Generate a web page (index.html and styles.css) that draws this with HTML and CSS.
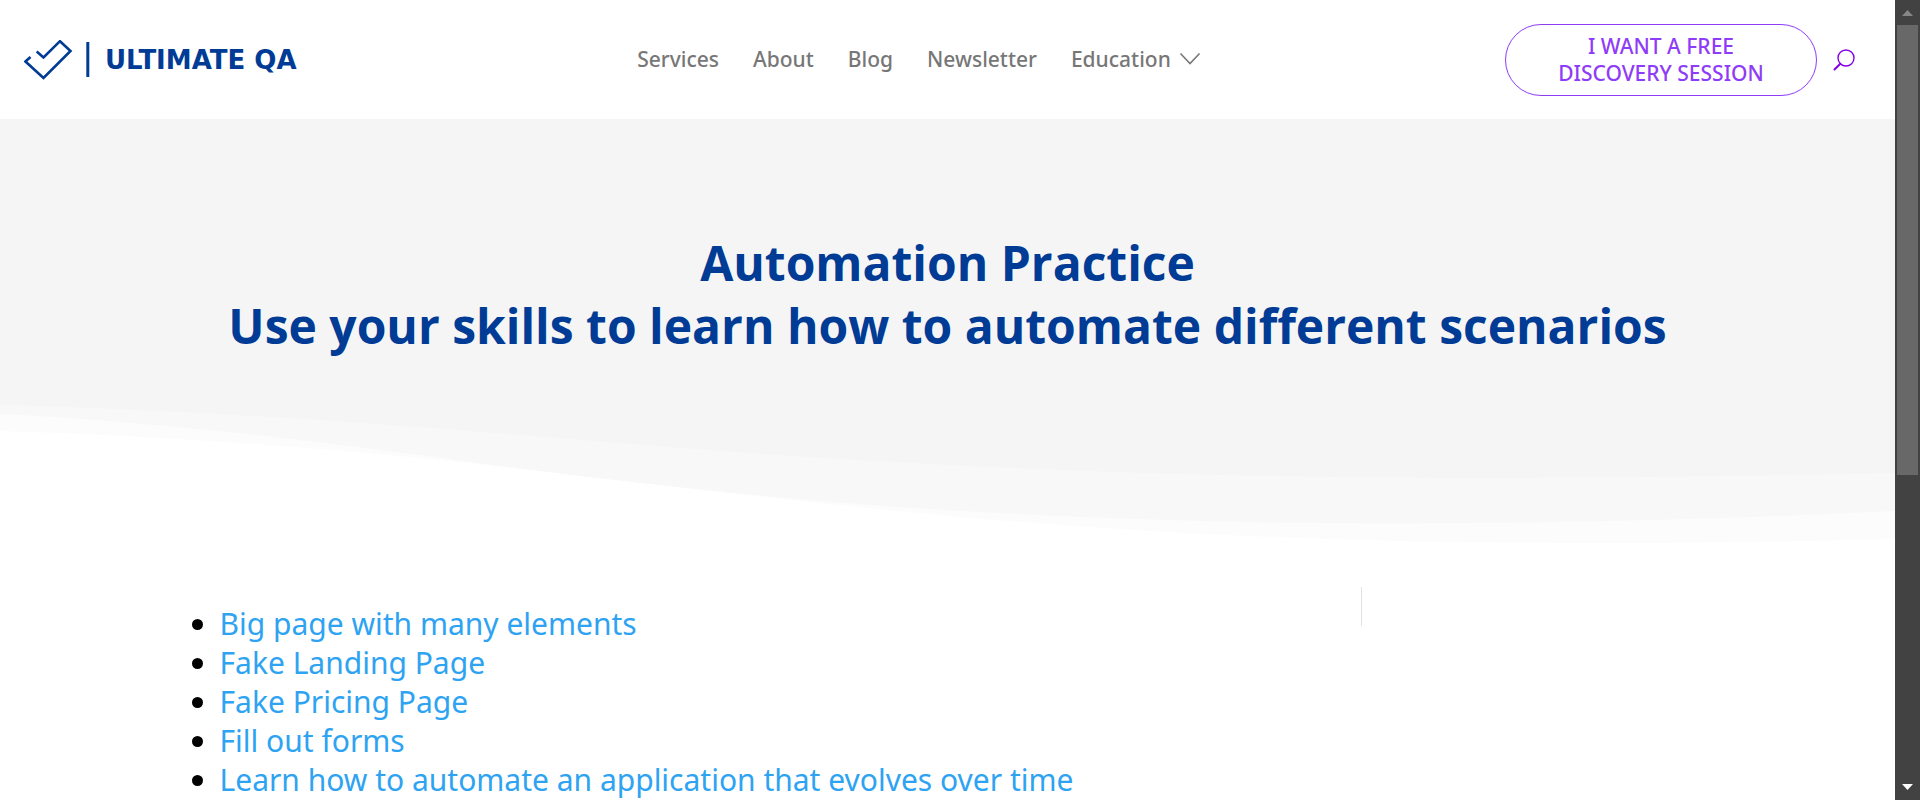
FILE: index.html
```html
<!DOCTYPE html>
<html lang="en">
<head>
<meta charset="utf-8">
<meta name="viewport" content="width=device-width, initial-scale=1">
<title>Automation Practice - Ultimate QA</title>
<link rel="stylesheet" href="styles.css">
</head>
<body>
<div class="page">
  <header class="site-header">
    <a class="logo" href="#">
      <svg class="logo-mark" viewBox="0 0 66 40" width="66" height="40" aria-hidden="true">
        <path d="M7 16.500L2 21L20 37.500L47 10.500L36.500 0.700L20 17L13.200 11" transform="translate(-0.500 0.500)" fill="none" stroke="currentColor" stroke-width="2.600"/>
        <path d="M63.800 2V37" stroke="currentColor" stroke-width="3"/>
      </svg>
      <span class="logo-text">ULTIMATE QA</span>
    </a>
    <nav class="site-nav" aria-label="Main">
      <a href="#">Services</a>
      <a href="#">About</a>
      <a href="#">Blog</a>
      <a href="#">Newsletter</a>
      <a class="has-menu" href="#">Education
        <svg viewBox="0 0 22 14" width="22" height="14" aria-hidden="true"><path d="M1.500 1.500L11 11.500L20.500 1.500" fill="none" stroke="currentColor" stroke-width="1.600"/></svg>
      </a>
    </nav>
    <div class="header-actions">
      <a class="cta" href="#">I WANT A FREE<br>DISCOVERY SESSION</a>
      <button class="search" type="button" aria-label="Search">
        <svg viewBox="0 0 22 22" width="22" height="22" aria-hidden="true"><circle cx="13" cy="9" r="8" fill="none" stroke="currentColor" stroke-width="1.400"/><path d="M7.300 14.700L1.500 20.500" stroke="currentColor" stroke-width="2" stroke-linecap="round"/></svg>
      </button>
    </div>
  </header>
  <main>
    <section class="hero">
      <h1 class="hero-title">Automation Practice<br>Use your skills to learn how to automate different scenarios</h1>
      <svg class="waves" viewBox="0 400 1895 150" preserveAspectRatio="none" aria-hidden="true">
        <path class="wave-back" d="M0 405C204 410 408 425.500 612 442.500C728 452.400 844 459.700 960 465.500C1138 474.400 1315 478 1493 478C1627 478 1761 476 1895 473V550H0Z"/>
        <path class="wave-mid" d="M0 414C159 422 319 441 478 463C639 485 799 501 960 511C1103 519 1246 523.500 1389 523.500C1558 523.500 1726 519 1895 511V550H0Z"/>
        <path class="wave-front" d="M0 431C159 436 319 447 478 464C639 483 799 502 960 517C1164 535 1368 543 1572 543C1680 543 1787 542 1895 539V550H0Z"/>
      </svg>
    </section>
    <div class="content">
      <ul class="practice-list">
        <li><a href="#">Big page with many elements</a></li>
        <li><a href="#">Fake Landing Page</a></li>
        <li><a href="#">Fake Pricing Page</a></li>
        <li><a href="#">Fill out forms</a></li>
        <li><a href="#">Learn how to automate an application that evolves over time</a></li>
      </ul>
      <aside class="sidebar"></aside>
    </div>
  </main>
</div>
<div class="scrollbar" aria-hidden="true">
  <svg class="arrow arrow-up" viewBox="0 0 25 25"><path d="M7 16H18L12.500 10Z"/></svg>
  <div class="track"><div class="thumb"></div></div>
  <svg class="arrow arrow-down" viewBox="0 0 25 25"><path d="M7 9H18L12.500 15Z"/></svg>
</div>
</body>
</html>
```

FILE: styles.css
```css
* {
  box-sizing: border-box;
}

body {
  display: flex;
  height: 100vh;
  margin: 0;
  overflow: hidden;
  background: #fff;
  font-family: "Noto Sans", "Open Sans", sans-serif;
}

a {
  color: inherit;
  text-decoration: none;
}

.page {
  flex: 1;
  min-width: 0;
  overflow: hidden;
}

.site-header {
  display: grid;
  grid-template-columns: 1fr auto 1fr;
  align-items: center;
  padding: 24px 40px 23px 24px;
}

.logo {
  display: flex;
  align-items: center;
  gap: 15px;
  color: #003b95;
}

.logo-text {
  font-family: "DejaVu Sans", sans-serif;
  font-size: 26px;
  font-weight: 700;
  line-height: 30px;
}

.site-nav {
  display: flex;
  gap: 34px;
  margin-right: 41px;
  padding-bottom: 2px;
  color: #777;
  font-size: 21px;
  font-weight: 500;
  line-height: 28px;
}

.has-menu {
  display: flex;
  align-items: center;
  gap: 8px;
}

.header-actions {
  display: flex;
  justify-content: flex-end;
  align-items: center;
  gap: 16px;
}

.cta {
  width: 312px;
  padding: 8px 16px;
  border: 1px solid #8e3cf7;
  border-radius: 36px;
  color: #8e3cf7;
  font-size: 21px;
  font-weight: 500;
  line-height: 27px;
  text-align: center;
}

.search {
  display: flex;
  padding: 0;
  border: 0;
  background: none;
  color: #8300e9;
}

.hero {
  padding-top: 112px;
  background: #f5f5f5;
}

.hero-title {
  margin: 0 auto;
  padding-bottom: 43px;
  color: #003b95;
  font-family: "Open Sans", "Noto Sans", sans-serif;
  font-size: 48px;
  font-weight: 700;
  line-height: 63px;
  text-align: center;
}

.waves {
  display: block;
  width: 100%;
  height: 150px;
}

.wave-back {
  fill: #f8f8f8;
}

.wave-mid {
  fill: #fcfcfc;
}

.wave-front {
  fill: #fff;
}

.content {
  display: grid;
  grid-template-columns: 1fr 345px;
  align-items: start;
  width: 80%;
  margin: 0 auto;
  padding-top: 37px;
}

.practice-list {
  margin: 0;
  padding: 17px 0 24px 30px;
  font-size: 30px;
  font-weight: 400;
  line-height: 39px;
}

.practice-list a {
  color: #2ea3f2;
}

.sidebar {
  height: 39px;
  border-left: 1px solid #e2e2e2;
}

.scrollbar {
  display: flex;
  flex-direction: column;
  width: 25px;
  background: #424242;
}

.arrow {
  width: 25px;
  height: 25px;
}

.arrow-up {
  fill: #868686;
}

.arrow-down {
  fill: #fff;
}

.track {
  flex: 1;
  padding: 0 2px;
}

.thumb {
  height: 60%;
  background: #686868;
}
```
